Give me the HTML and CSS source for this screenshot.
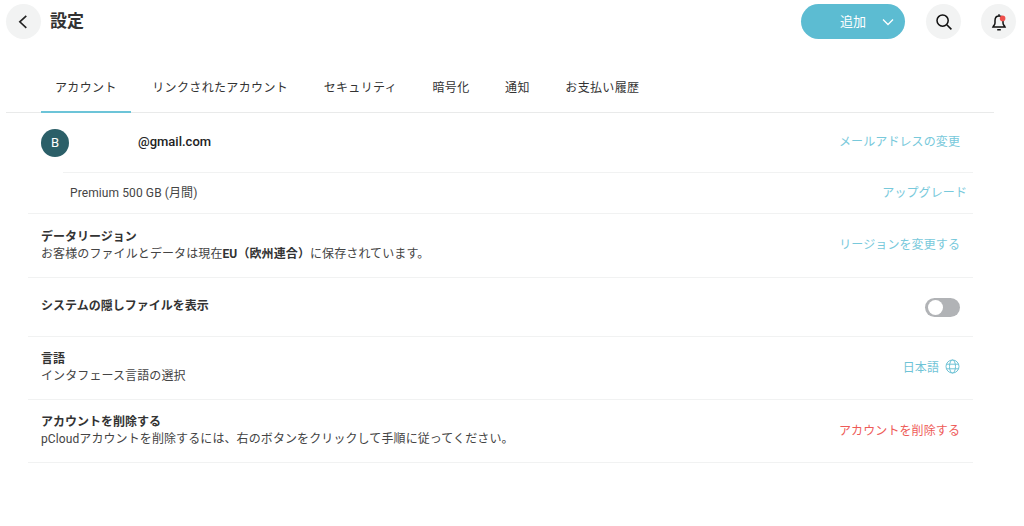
FILE: index.html
```html
<!DOCTYPE html>
<html lang="ja">
<head>
<meta charset="utf-8">
<title>設定</title>
<link rel="stylesheet" href="styles.css">
</head>
<body>
<header class="topbar">
  <button class="round back" aria-label="戻る">
    <svg width="14" height="14" viewBox="0 0 14 14"><path d="M9.3 0.8 L2.8 6.8 L9.3 12.8" fill="none" stroke="#222" stroke-width="1.6"/></svg>
  </button>
  <h1 class="title">設定</h1>
  <div class="spacer"></div>
  <button class="add"><span class="add-label">追加</span>
    <svg class="add-caret" width="12" height="8" viewBox="0 0 12 8"><path d="M1 1.5 L6 6.5 L11 1.5" fill="none" stroke="#fff" stroke-width="1.3"/></svg>
  </button>
  <button class="round search" aria-label="検索">
    <svg width="18" height="18" viewBox="0 0 18 18"><circle cx="7.6" cy="7.6" r="5.6" fill="none" stroke="#111" stroke-width="1.5"/><path d="M11.8 11.8 L16.4 16.4" stroke="#111" stroke-width="1.6"/></svg>
  </button>
  <button class="round bell" aria-label="通知">
    <svg width="18" height="20" viewBox="0 0 18 20"><path d="M9 4 C6.2 4 5 6.2 5 8.5 V11 C5 12.6 3.8 13.4 3 15 H15 C14.2 13.4 13 12.6 13 11 V8.5 C13 6.2 11.8 4 9 4 Z M9 2.2 V4 M7.2 17.8 H10.8" fill="none" stroke="#111" stroke-width="1.5"/><circle cx="12.6" cy="6.4" r="2.8" fill="#ee4f4b"/></svg>
  </button>
</header>

<nav class="tabs">
  <a class="tab active">アカウント</a>
  <a class="tab">リンクされたアカウント</a>
  <a class="tab">セキュリティ</a>
  <a class="tab">暗号化</a>
  <a class="tab">通知</a>
  <a class="tab">お支払い履歴</a>
</nav>

<main class="list">
  <section class="row row-user">
    <div class="avatar">B</div>
    <div class="email">@gmail.com</div>
    <a class="link">メールアドレスの変更</a>
  </section>
  <section class="row row-plan">
    <div class="plan">Premium 500 GB (月間)</div>
    <a class="link">アップグレード</a>
  </section>
  <section class="row row-text row-region">
    <div class="info">
      <div class="label">データリージョン</div>
      <div class="desc">お客様のファイルとデータは現在<b>EU（欧州連合）</b>に保存されています。</div>
    </div>
    <a class="link">リージョンを変更する</a>
  </section>
  <section class="row row-toggle">
    <div class="label">システムの隠しファイルを表示</div>
    <div class="toggle"><span class="knob"></span></div>
  </section>
  <section class="row row-text">
    <div class="info">
      <div class="label">言語</div>
      <div class="desc">インタフェース言語の選択</div>
    </div>
    <a class="link lang">日本語
      <svg width="15" height="15" viewBox="0 0 15 15" fill="none" stroke="#6fc3d6" stroke-width="1"><circle cx="7.5" cy="7.5" r="6.5"/><ellipse cx="7.5" cy="7.5" rx="3" ry="6.5"/><path d="M1.4 5.2 H13.6 M1.4 9.8 H13.6"/></svg>
    </a>
  </section>
  <section class="row row-text">
    <div class="info">
      <div class="label">アカウントを削除する</div>
      <div class="desc">pCloudアカウントを削除するには、右のボタンをクリックして手順に従ってください。</div>
    </div>
    <a class="link danger">アカウントを削除する</a>
  </section>
</main>
</body>
</html>
```
FILE: styles.css
```css
* { box-sizing: border-box; }
html, body { margin: 0; padding: 0; background: #fff; }
body {
  width: 1024px;
  height: 526px;
  overflow: hidden;
  font-family: Roboto, "Noto Sans CJK JP", sans-serif;
  font-size: 12px;
  color: #333;
}
button { border: 0; padding: 0; font: inherit; }

.topbar {
  display: flex;
  align-items: center;
  height: 43px;
  padding: 4px 8px 4px 6px;
}
.round {
  width: 35px;
  height: 35px;
  border-radius: 50%;
  background: #f2f3f3;
  display: flex;
  align-items: center;
  justify-content: center;
  flex: none;
}
.title {
  margin: 0 0 0 9px;
  font-size: 17px;
  line-height: 35px;
  font-weight: 700;
  color: #333;
}
.spacer { flex: 1; }
.add {
  width: 104px;
  height: 35px;
  border-radius: 18px;
  background: #5cbcd2;
  color: #fff;
  display: flex;
  align-items: center;
  font-size: 13px;
  padding-left: 39px;
}
.add-label { margin-right: 16px; padding-bottom: 2px; }
.search { margin-left: 21px; }
.bell { margin-left: 20px; }

.tabs {
  display: flex;
  gap: 7.5px;
  height: 70px;
  margin: 0 30px 0 6px;
  padding: 27px 0 0 35px;
  border-bottom: 1px solid #e9eaea;
}
.tab {
  padding: 0 14px;
  height: 43px;
  line-height: 36px;
  font-size: 12px;
  letter-spacing: 0.35px;
  color: #333;
  white-space: nowrap;
}
.tab.active { border-bottom: 2px solid #6cc4d8; }

.list { margin: 0 51px 0 28px; }
.row {
  display: flex;
  align-items: center;
  justify-content: space-between;
  border-bottom: 1px solid #f1f2f2;
  padding: 0 13px;
}
.link {
  font-size: 12px;
  letter-spacing: 0.1px;
  color: #78c9db;
  white-space: nowrap;
  margin-bottom: 4px;
}
.row-user {
  height: 60px;
  margin-left: 35px;
  padding: 0 13px 0 0;
  justify-content: flex-start;
}
.avatar {
  width: 28px;
  height: 28px;
  margin-left: -22px;
  border-radius: 50%;
  background: #2b5f68;
  color: #fff;
  font-size: 13px;
  line-height: 28px;
  text-align: center;
  flex: none;
}
.email {
  margin-left: 69px;
  margin-bottom: 2px;
  font-size: 13px;
  font-weight: 500;
  color: #222;
}
.row-user .link { margin-left: auto; }
.row-plan { height: 41px; padding: 0 6px 0 42px; }
.plan { font-size: 12px; letter-spacing: 0.1px; color: #444; margin-bottom: 4px; }
.row-text { height: 63px; }
.row-text .info { margin-bottom: 2px; }
.row-region { height: 64px; }
.row-region .info { margin-bottom: 0; }
.row-toggle { height: 59px; align-items: flex-start; padding-top: 20px; }
.row-toggle .label { line-height: 17px; }
.info { display: flex; flex-direction: column; }
.label {
  font-size: 12px;
  line-height: 18px;
  font-weight: 700;
  color: #333;
}
.desc {
  font-size: 12px;
  line-height: 17px;
  color: #444;
  letter-spacing: 0.1px;
}
.desc b { font-weight: 700; color: #333; }
.lang { display: flex; align-items: center; gap: 6px; color: #6fc3d6; }
.danger { color: #ee5b58; }
.toggle {
  width: 35px;
  height: 19px;
  border-radius: 10px;
  background: #b1b3b6;
  padding: 2px 3px;
}
.knob {
  display: block;
  width: 15px;
  height: 15px;
  border-radius: 50%;
  background: #fff;
}
```
